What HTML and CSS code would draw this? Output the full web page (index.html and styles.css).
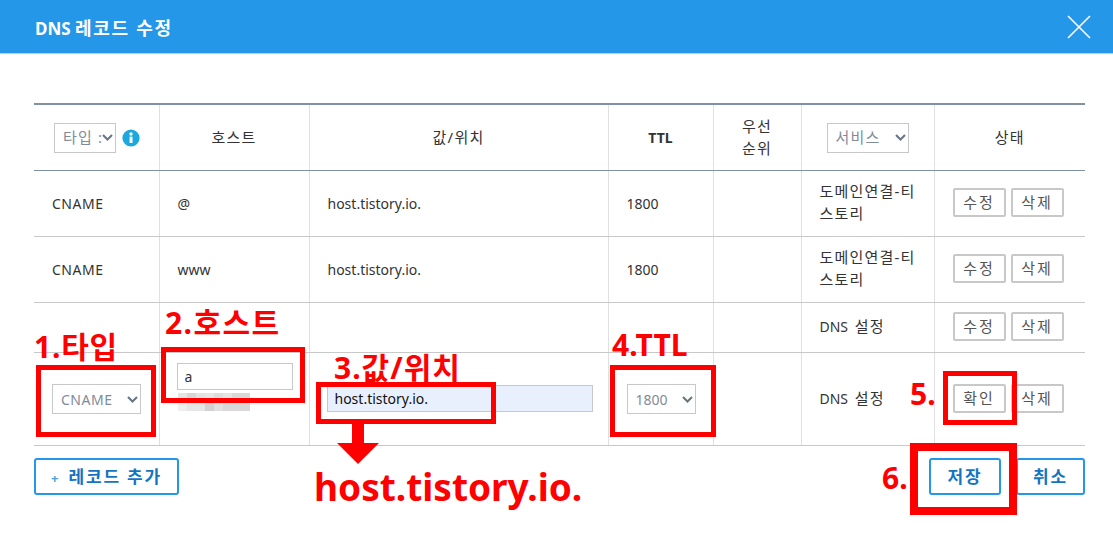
FILE: index.html
```html
<!DOCTYPE html>
<html lang="ko">
<head>
    <meta charset="UTF-8">
    <title>DNS 레코드 수정</title>
    <link rel="stylesheet" href="styles.css">
</head>
<body>
    <div class="modal-head">
        <h1>DNS <span class="title-ko">레코드 수정</span></h1>
        <svg class="close-icon" width="24" height="24" viewBox="0 0 24 24"><path d="M1 1 L23 23 M23 1 L1 23" stroke="#fff" stroke-width="1.6" fill="none"/></svg>
    </div>

    <div class="modal-body">
        <table class="dns-table">
            <colgroup>
                <col class="col-type"><col class="col-host"><col class="col-value"><col class="col-ttl"><col class="col-prio"><col class="col-service"><col class="col-state">
            </colgroup>
            <thead>
                <tr>
                    <th>
                        <div class="type-head">
                            <select class="sel sel-type"><option>타입 : 전체</option></select>
                            <svg class="info-icon" width="18" height="18" viewBox="0 0 18 18"><circle cx="9" cy="9" r="8.6" fill="#1ba8de"/><rect x="7.6" y="7.6" width="2.9" height="6.4" fill="#fff"/><circle cx="9" cy="5" r="1.7" fill="#fff"/></svg>
                        </div>
                    </th>
                    <th class="ko">호스트</th>
                    <th class="ko">값/위치</th>
                    <th class="ttl-head">TTL</th>
                    <th class="ko">우선<br>순위</th>
                    <th><select class="sel sel-service"><option>서비스</option></select></th>
                    <th class="ko">상태</th>
                </tr>
            </thead>
            <tbody>
                <tr class="row-tall">
                    <td class="type-cell">CNAME</td>
                    <td>@</td>
                    <td>host.tistory.io.</td>
                    <td>1800</td>
                    <td></td>
                    <td class="service ko">도메인연결-티<br>스토리</td>
                    <td class="state"><button class="btn-gray">수정</button><button class="btn-gray">삭제</button></td>
                </tr>
                <tr class="row-tall">
                    <td class="type-cell">CNAME</td>
                    <td>www</td>
                    <td>host.tistory.io.</td>
                    <td>1800</td>
                    <td></td>
                    <td class="service ko">도메인연결-티<br>스토리</td>
                    <td class="state"><button class="btn-gray">수정</button><button class="btn-gray">삭제</button></td>
                </tr>
                <tr class="row-short">
                    <td></td>
                    <td></td>
                    <td></td>
                    <td></td>
                    <td></td>
                    <td class="service">DNS <span class="ko dns-word">설정</span></td>
                    <td class="state"><button class="btn-gray">수정</button><button class="btn-gray">삭제</button></td>
                </tr>
                <tr class="row-edit">
                    <td><select class="sel sel-cname"><option>CNAME</option></select></td>
                    <td class="host-cell">
                        <input class="field" type="text" value="a">
                        <div class="blur-note">
                            <span></span><span></span><span></span><span></span><span></span><span></span><span></span><span></span>
                            <span></span><span></span><span></span><span></span><span></span><span></span><span></span><span></span>
                        </div>
                    </td>
                    <td><input class="field field-filled" type="text" value="host.tistory.io."></td>
                    <td><select class="sel sel-ttl"><option>1800</option></select></td>
                    <td></td>
                    <td class="service">DNS <span class="ko dns-word">설정</span></td>
                    <td class="state"><button class="btn-gray">확인</button><button class="btn-gray">삭제</button></td>
                </tr>
            </tbody>
        </table>

        <div class="actions">
            <button class="btn-blue btn-add"><span class="plus">+</span> 레코드 추가</button>
            <div class="actions-right">
                <button class="btn-blue btn-save">저장</button>
                <button class="btn-blue btn-cancel">취소</button>
            </div>
        </div>
    </div>

    <!-- red notes drawn over the screenshot -->
    <div class="mark mark-1"></div>
    <div class="mark mark-2"></div>
    <div class="mark mark-3"></div>
    <div class="mark mark-4"></div>
    <div class="mark mark-5"></div>
    <div class="mark mark-6"></div>
    <span class="note note-1">1.타입</span>
    <span class="note note-2">2.호스트</span>
    <span class="note note-3">3.값/위치</span>
    <span class="note note-4">4.TTL</span>
    <span class="note note-5">5.</span>
    <span class="note note-6">6.</span>
    <svg class="arrow" width="42" height="40" viewBox="0 0 42 40"><path d="M15 0 H27 V19 H42 L21 40 L0 19 H15 Z" fill="#ff0000"/></svg>
    <span class="note note-host">host.tistory.io.</span>
</body>
</html>
```

FILE: styles.css
```css
body {
    position: relative;
    margin: 0;
    height: 539px;
    overflow: hidden;
    background-color: #fff;
    color: #333;
    font-family: "Noto Sans", "Noto Sans CJK KR", sans-serif;
    font-size: 14px;
}
.ko {
    font-size: 15px;
    letter-spacing: 1.2px;
}
.modal-head {
    display: flex;
    align-items: center;
    justify-content: space-between;
    height: 53px;
    padding: 0 22px 0 35px;
    background-color: #2597e8;
    border-bottom: 1px solid #a9d5f5;
}
.modal-head h1 {
    margin: 0;
    color: #fff;
    font-size: 17px;
    font-weight: 700;
}
.title-ko {
    font-size: 18px;
    letter-spacing: 1.7px;
}
.close-icon {
    display: block;
}
.modal-body {
    padding: 49px 28px 0 34px;
}
.dns-table {
    width: 1051px;
    border-collapse: collapse;
    table-layout: fixed;
    border-top: 2px solid #7f92a3;
}
.col-type { width: 125px; }
.col-host { width: 150px; }
.col-value { width: 299px; }
.col-ttl { width: 105px; }
.col-prio { width: 88px; }
.col-service { width: 133px; }
.col-state { width: 151px; }
.dns-table th, .dns-table td {
    padding: 0;
    border-right: 1px solid #e0e0e0;
    font-weight: 400;
}
.dns-table th:last-child, .dns-table td:last-child {
    border-right: none;
}
.dns-table th {
    height: 65px;
    border-bottom: 1px solid #7f92a3;
    text-align: center;
    line-height: 22px;
}
.dns-table th.ko {
    height: 63px;
    padding-bottom: 2px;
}
.dns-table th.ttl-head {
    font-weight: 700;
}
.dns-table td {
    padding-left: 18px;
    border-bottom: 1px solid #c8c8c8;
}
.row-tall td { height: 65px; }
.row-short td { height: 49px; }
.row-edit td { height: 92px; }
.type-cell {
    letter-spacing: 0.5px;
}
.dns-word {
    margin-left: 3px;
}
.service {
    line-height: 22px;
}
.dns-table td.service {
    padding-bottom: 2px;
}
.dns-table .row-tall td.service {
    height: 61px;
    padding-bottom: 4px;
}
.row-short td.service { height: 47px; }
.row-edit td.service { height: 90px; }
.dns-table td.state {
    padding-left: 18px;
    white-space: nowrap;
}
.type-head {
    display: flex;
    align-items: center;
    padding-left: 20px;
    gap: 6px;
}
.info-icon {
    display: block;
}
.sel {
    display: block;
    height: 30px;
    padding: 0 16px 0 8px;
    box-sizing: border-box;
    appearance: none;
    border: 1px solid #c8c8c8;
    background: #fff url("data:image/svg+xml,%3Csvg xmlns='http://www.w3.org/2000/svg' width='11' height='7' viewBox='0 0 11 7'%3E%3Cpath d='M1 1 L5.5 5.5 L10 1' stroke='%23667485' stroke-width='2' fill='none'/%3E%3C/svg%3E") no-repeat right 2px center;
    color: #7f8b99;
    font-family: inherit;
    font-size: 14px;
}
.sel-type, .sel-service {
    padding-bottom: 2px;
    font-size: 15px;
    letter-spacing: 1.2px;
}
.sel-type { width: 62px; padding-right: 12px; }
.sel-service { width: 82px; margin-left: 25px; }
.sel-cname { width: 89px; letter-spacing: 0.5px; }
.sel-ttl { width: 69px; }
.field {
    display: block;
    height: 27px;
    padding: 0 7px;
    box-sizing: border-box;
    border: 1px solid #c8c8c8;
    color: #333;
    font-family: inherit;
    font-size: 14px;
}
.field-filled {
    width: 266px;
    margin: -2px 0 0 -1px;
    background-color: #e8f0fe;
    color: #111;
}
.host-cell {
    vertical-align: top;
}
.host-cell .field {
    width: 116px;
    margin: 10px 0 0 -1px;
}
.blur-note {
    display: grid;
    grid-template-columns: repeat(8, 9px);
    grid-auto-rows: 9px;
    margin-top: 3px;
}
.blur-note span:nth-child(1) { background-color: #e4e4e4; }
.blur-note span:nth-child(2) { background-color: #d6d6d6; }
.blur-note span:nth-child(3) { background-color: #e2e2e2; }
.blur-note span:nth-child(4) { background-color: #e6e6e6; }
.blur-note span:nth-child(5) { background-color: #dcdcdc; }
.blur-note span:nth-child(6) { background-color: #e4e4e4; }
.blur-note span:nth-child(7) { background-color: #d8d8d8; }
.blur-note span:nth-child(8) { background-color: #d8d8d8; }
.blur-note span:nth-child(9) { background-color: #eeeeee; }
.blur-note span:nth-child(10) { background-color: #e6e6e6; }
.blur-note span:nth-child(11) { background-color: #e4e8e4; }
.blur-note span:nth-child(12) { background-color: #d4d0d4; }
.blur-note span:nth-child(13) { background-color: #e0e0e0; }
.blur-note span:nth-child(14) { background-color: #d8d8d8; }
.blur-note span:nth-child(15) { background-color: #d8d8d8; }
.blur-note span:nth-child(16) { background-color: #d8d8d8; }
.btn-gray {
    width: 53px;
    height: 29px;
    margin: 0 5px 2px 0;
    padding: 0 0 2px;
    border: 2px solid #c8c8c8;
    border-radius: 2px;
    background-color: #fff;
    color: #555;
    font-family: inherit;
    font-size: 15px;
    letter-spacing: 2px;
}
.actions {
    display: flex;
    justify-content: space-between;
    margin-top: 12px;
}
.actions-right {
    display: flex;
    gap: 15px;
}
.btn-blue {
    height: 37px;
    padding: 0 0 2px;
    border: 2px solid #2597e8;
    border-radius: 3px;
    background-color: #fff;
    color: #1574c0;
    font-family: inherit;
    font-size: 17px;
    font-weight: 700;
    letter-spacing: 1.8px;
}
.btn-add { width: 145px; }
.btn-save { width: 72px; }
.btn-cancel { width: 69px; }
.plus {
    margin-right: 2px;
    color: #4a9fdc;
    font-size: 13px;
}
/* annotations */
.mark {
    position: absolute;
    box-sizing: border-box;
    border: 5px solid #ff0000;
}
.mark-1 { left: 36px; top: 365px; width: 120px; height: 72px; }
.mark-2 { left: 161px; top: 347px; width: 144px; height: 56px; }
.mark-3 { left: 316px; top: 382px; width: 180px; height: 42px; }
.mark-4 { left: 610px; top: 365px; width: 106px; height: 72px; }
.mark-5 { left: 943px; top: 371px; width: 74px; height: 54px; }
.mark-6 { left: 910px; top: 443px; width: 107px; height: 72px; border-width: 8px; }
.note {
    position: absolute;
    color: #ff0000;
    font-family: "Noto Sans", "Noto Sans CJK KR", sans-serif;
    font-size: 30px;
    font-weight: 700;
    line-height: 40px;
    white-space: nowrap;
}
.note-1 { left: 34px; top: 327px; letter-spacing: 0.8px; }
.note-2 { left: 165px; top: 303px; letter-spacing: 1.4px; }
.note-3 { left: 334px; top: 348px; letter-spacing: 1px; }
.note-4 { left: 612px; top: 325px; }
.note-5 { left: 910px; top: 374px; }
.note-6 { left: 882px; top: 458px; }
.note-host { left: 314px; top: 462px; font-size: 37px; line-height: 50px; }
.arrow {
    position: absolute;
    left: 337px;
    top: 424px;
}
```
